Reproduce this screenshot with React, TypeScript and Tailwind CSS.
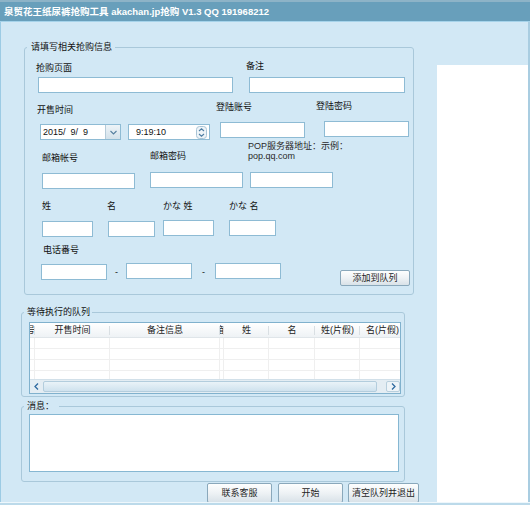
import React from 'react';

const font = "font-['Liberation_Sans','Noto_Sans_CJK_SC',sans-serif]";

function Field({ className = '' }: { className?: string }) {
  return <div className={`h-[16px] bg-white border border-[#8ebbd4] shrink-0 ${className}`} />;
}

function Btn({ className = '', children }: { className?: string; children: React.ReactNode }) {
  return (
    <div
      className={`shrink-0 flex items-center justify-center border border-[#8aa8bb] rounded-[2px] bg-linear-to-b from-[#fdfefe] via-[#eef2f5] to-[#d9e2e8] text-[#1e1e1e] ${className}`}
    >
      {children}
    </div>
  );
}

function DatePicker() {
  return (
    <div className="flex w-[81px] h-[16px] bg-white border border-[#8ebbd4] shrink-0">
      <span className="flex-1 pl-[2px] leading-[14px] whitespace-pre text-[#111]">2015/  9/  9</span>
      <span className="w-[15px] flex items-center justify-center bg-linear-to-b from-[#eef4f8] to-[#d3e1ea] border-l border-[#b5cbd9]">
        <svg width="7" height="5" viewBox="0 0 7 5">
          <path d="M0.5 1 L3.5 4 L6.5 1" fill="none" stroke="#557f9f" strokeWidth="1.1" />
        </svg>
      </span>
    </div>
  );
}

function TimePicker() {
  return (
    <div className="flex items-center w-[82px] h-[16px] ml-[7px] bg-white border border-[#8ebbd4] shrink-0">
      <span className="flex-1 pl-[7px] leading-[14px] text-[#111]">9:19:10</span>
      <svg width="11" height="13" viewBox="0 0 11 13" className="mr-[2px]">
        <rect x="0.5" y="0.5" width="10" height="12" rx="3" fill="#eef4f8" stroke="#a9c4d6" />
        <path d="M3 5 L5.5 2.8 L8 5" fill="none" stroke="#4f7ea3" strokeWidth="1.1" />
        <path d="M3 8 L5.5 10.2 L8 8" fill="none" stroke="#4f7ea3" strokeWidth="1.1" />
      </svg>
    </div>
  );
}

const cols = [
  { w: 'w-[5px]', label: '号', clip: true },
  { w: 'w-[75px]', label: '开售时间' },
  { w: 'w-[110px]', label: '备注信息' },
  { w: 'w-[4px]', label: '箱', clip: true },
  { w: 'w-[45px]', label: '姓' },
  { w: 'w-[46px]', label: '名' },
  { w: 'w-[45px]', label: '姓(片假)' },
  { w: 'w-[45px]', label: '名(片假)' },
];

function QueueList() {
  return (
    <div className="ml-[7px] mt-[4px] w-[372px] h-[72px] border border-[#80b1cd] bg-white flex flex-col overflow-hidden">
      <div className="flex h-[15px] shrink-0 bg-linear-to-b from-white to-[#eef2f5] border-b border-[#dfe5e9] overflow-hidden">
        {cols.map((c, i) => (
          <div
            key={i}
            className={`${c.w} shrink-0 relative flex items-center overflow-hidden whitespace-nowrap text-[#222] ${c.clip ? 'justify-end' : 'justify-center'}`}
          >
            {c.label}
            <span className="absolute right-0 top-[3px] h-[9px] w-px bg-[#d9dfe3]" />
          </div>
        ))}
      </div>
      <div className="flex-1 overflow-hidden">
        {[0, 1, 2, 3].map((r) => (
          <div key={r} className="flex h-[11px] border-b border-[#efefef]">
            {cols.map((c, i) => (
              <div key={i} className={`${c.w} shrink-0 border-r border-[#efefef]`} />
            ))}
          </div>
        ))}
      </div>
      <div className="flex h-[14px] shrink-0 bg-[#e4edf3] border-t border-[#d2e0e9]">
        <div className="w-[13px] flex items-center justify-center">
          <svg width="5" height="7" viewBox="0 0 5 7">
            <path d="M4 0.5 L1 3.5 L4 6.5" fill="none" stroke="#2f6aa0" strokeWidth="1.3" />
          </svg>
        </div>
        <div className="w-[334px] my-[1px] rounded-[2px] border border-[#b3cddd] bg-linear-to-b from-[#eaf3f8] to-[#cfe2ee]" />
        <div className="flex-1" />
        <div className="w-[14px] flex items-center justify-center border border-[#b8cfdd] bg-[#eef4f8] rounded-[2px] my-[1px]">
          <svg width="5" height="7" viewBox="0 0 5 7">
            <path d="M1 0.5 L4 3.5 L1 6.5" fill="none" stroke="#2f6aa0" strokeWidth="1.3" />
          </svg>
        </div>
      </div>
    </div>
  );
}

export default function App() {
  return (
    <div className={`w-[530px] h-[505px] overflow-hidden bg-[#d2e8f5] flex flex-col text-[9px] leading-[12px] text-[#111] ${font}`}>
      <div className="h-[22px] shrink-0 border-t-2 border-[#8db3c7] border-b border-b-[#a6d3ea] bg-[#689fbb] flex items-center pl-[4px] text-white font-bold text-[9.5px]">
        泉贸花王纸尿裤抢购工具 akachan.jp抢购 V1.3 QQ 191968212
      </div>

      <div className="flex flex-1 min-h-0 border-l border-[#9ccbe4] border-r-2 border-r-[#a9cde1]">
        <div className="w-[436px] shrink-0 overflow-hidden">
          <fieldset className="ml-[23px] mt-[19px] w-[390px] border border-[#a9c8da] rounded-[3px] pb-[8px]">
            <legend className="ml-[2px] pl-[4px] pr-[3px] leading-[12px]">请填写相关抢购信息</legend>

            <div className="flex items-start mt-[9px]">
              <div className="ml-[11px] w-[200px] shrink-0">
                <div className="h-[12px]">抢购页面</div>
                <Field className="ml-[2px] mt-[3px] w-[195px]" />
              </div>
              <div className="ml-[10px] -mt-[2px]">
                <div className="h-[12px]">备注</div>
                <Field className="ml-[3px] mt-[5px] w-[156px]" />
              </div>
            </div>

            <div className="flex items-start mt-[11px]">
              <div className="ml-[12px] w-[173px] shrink-0">
                <div className="h-[12px]">开售时间</div>
                <div className="flex mt-[8px] ml-[3px]">
                  <DatePicker />
                  <TimePicker />
                </div>
              </div>
              <div className="ml-[6px] -mt-[3px] w-[89px] shrink-0">
                <div className="h-[12px]">登陆账号</div>
                <Field className="ml-[4px] mt-[9px] w-[85px]" />
              </div>
              <div className="ml-[11px] -mt-[4px]">
                <div className="h-[12px]">登陆密码</div>
                <Field className="ml-[8px] mt-[9px] w-[85px]" />
              </div>
            </div>

            <div className="flex items-end mt-[1px]">
              <div className="ml-[17px] w-[93px] shrink-0">
                <div className="h-[12px]">邮箱帐号</div>
                <Field className="mt-[9px] w-[93px]" />
              </div>
              <div className="ml-[15px] w-[93px] shrink-0 mb-[1px]">
                <div className="h-[12px]">邮箱密码</div>
                <Field className="mt-[10px] w-[93px]" />
              </div>
              <div className="ml-[7px] w-[83px] shrink-0 mb-[1px]">
                <div className="-ml-[2px] whitespace-nowrap leading-[10px] text-[#2a2a2a]">
                  POP服务器地址：示例：
                  <br />
                  pop.qq.com
                </div>
                <Field className="mt-[11px] w-[83px]" />
              </div>
            </div>

            <div className="flex items-start mt-[11px]">
              <div className="ml-[17px] w-[51px] shrink-0">
                <div className="h-[12px]">姓</div>
                <Field className="mt-[9px] w-[51px]" />
              </div>
              <div className="ml-[14px] w-[48px] shrink-0">
                <div className="h-[12px]">名</div>
                <Field className="ml-[1px] mt-[9px] w-[47px]" />
              </div>
              <div className="ml-[8px] w-[51px] shrink-0">
                <div className="h-[12px] whitespace-nowrap">かな 姓</div>
                <Field className="mt-[8px] w-[51px]" />
              </div>
              <div className="ml-[15px] w-[47px] shrink-0">
                <div className="h-[12px] whitespace-nowrap">かな 名</div>
                <Field className="mt-[8px] w-[47px]" />
              </div>
            </div>

            <div className="mt-[7px] ml-[18px] h-[12px]">电话番号</div>
            <div className="flex items-start mt-[8px]">
              <Field className="ml-[16px] w-[66px]" />
              <span className="w-[19px] shrink-0 text-center mt-[2px]">-</span>
              <Field className="-mt-[1px] w-[66px]" />
              <span className="w-[23px] shrink-0 text-center mt-[2px]">-</span>
              <Field className="-mt-[1px] w-[66px]" />
              <Btn className="ml-[59px] mt-[6px] w-[70px] h-[16px]">添加到队列</Btn>
            </div>
          </fieldset>

          <fieldset className="ml-[20px] mt-[11px] w-[384px] border border-[#a9c8da] rounded-[3px] pb-[2px]">
            <legend className="ml-[2px] pl-[3px] pr-[2px] leading-[12px]">等待执行的队列</legend>
            <QueueList />
          </fieldset>

          <fieldset className="ml-[20px] mt-[3px] w-[384px] border border-[#a9c8da] rounded-[3px] pb-[9px]">
            <legend className="ml-[2px] pl-[3px] pr-[5px] leading-[12px]">消息：</legend>
            <div className="ml-[7px] mt-[2px] w-[370px] h-[58px] bg-white border border-[#86b7d2]" />
          </fieldset>

          <div className="flex mt-[1px] ml-[206px]">
            <Btn className="w-[65px] h-[20px]">联系客服</Btn>
            <Btn className="ml-[6px] w-[65px] h-[20px]">开始</Btn>
            <Btn className="ml-[5px] w-[71px] h-[20px]">清空队列并退出</Btn>
          </div>
        </div>
        <div className="mt-[43px] flex-1 bg-white" />
      </div>

      <div className="h-[3px] shrink-0 border-t border-[#eef7fc] bg-[#bcdaea]" />
    </div>
  );
}
